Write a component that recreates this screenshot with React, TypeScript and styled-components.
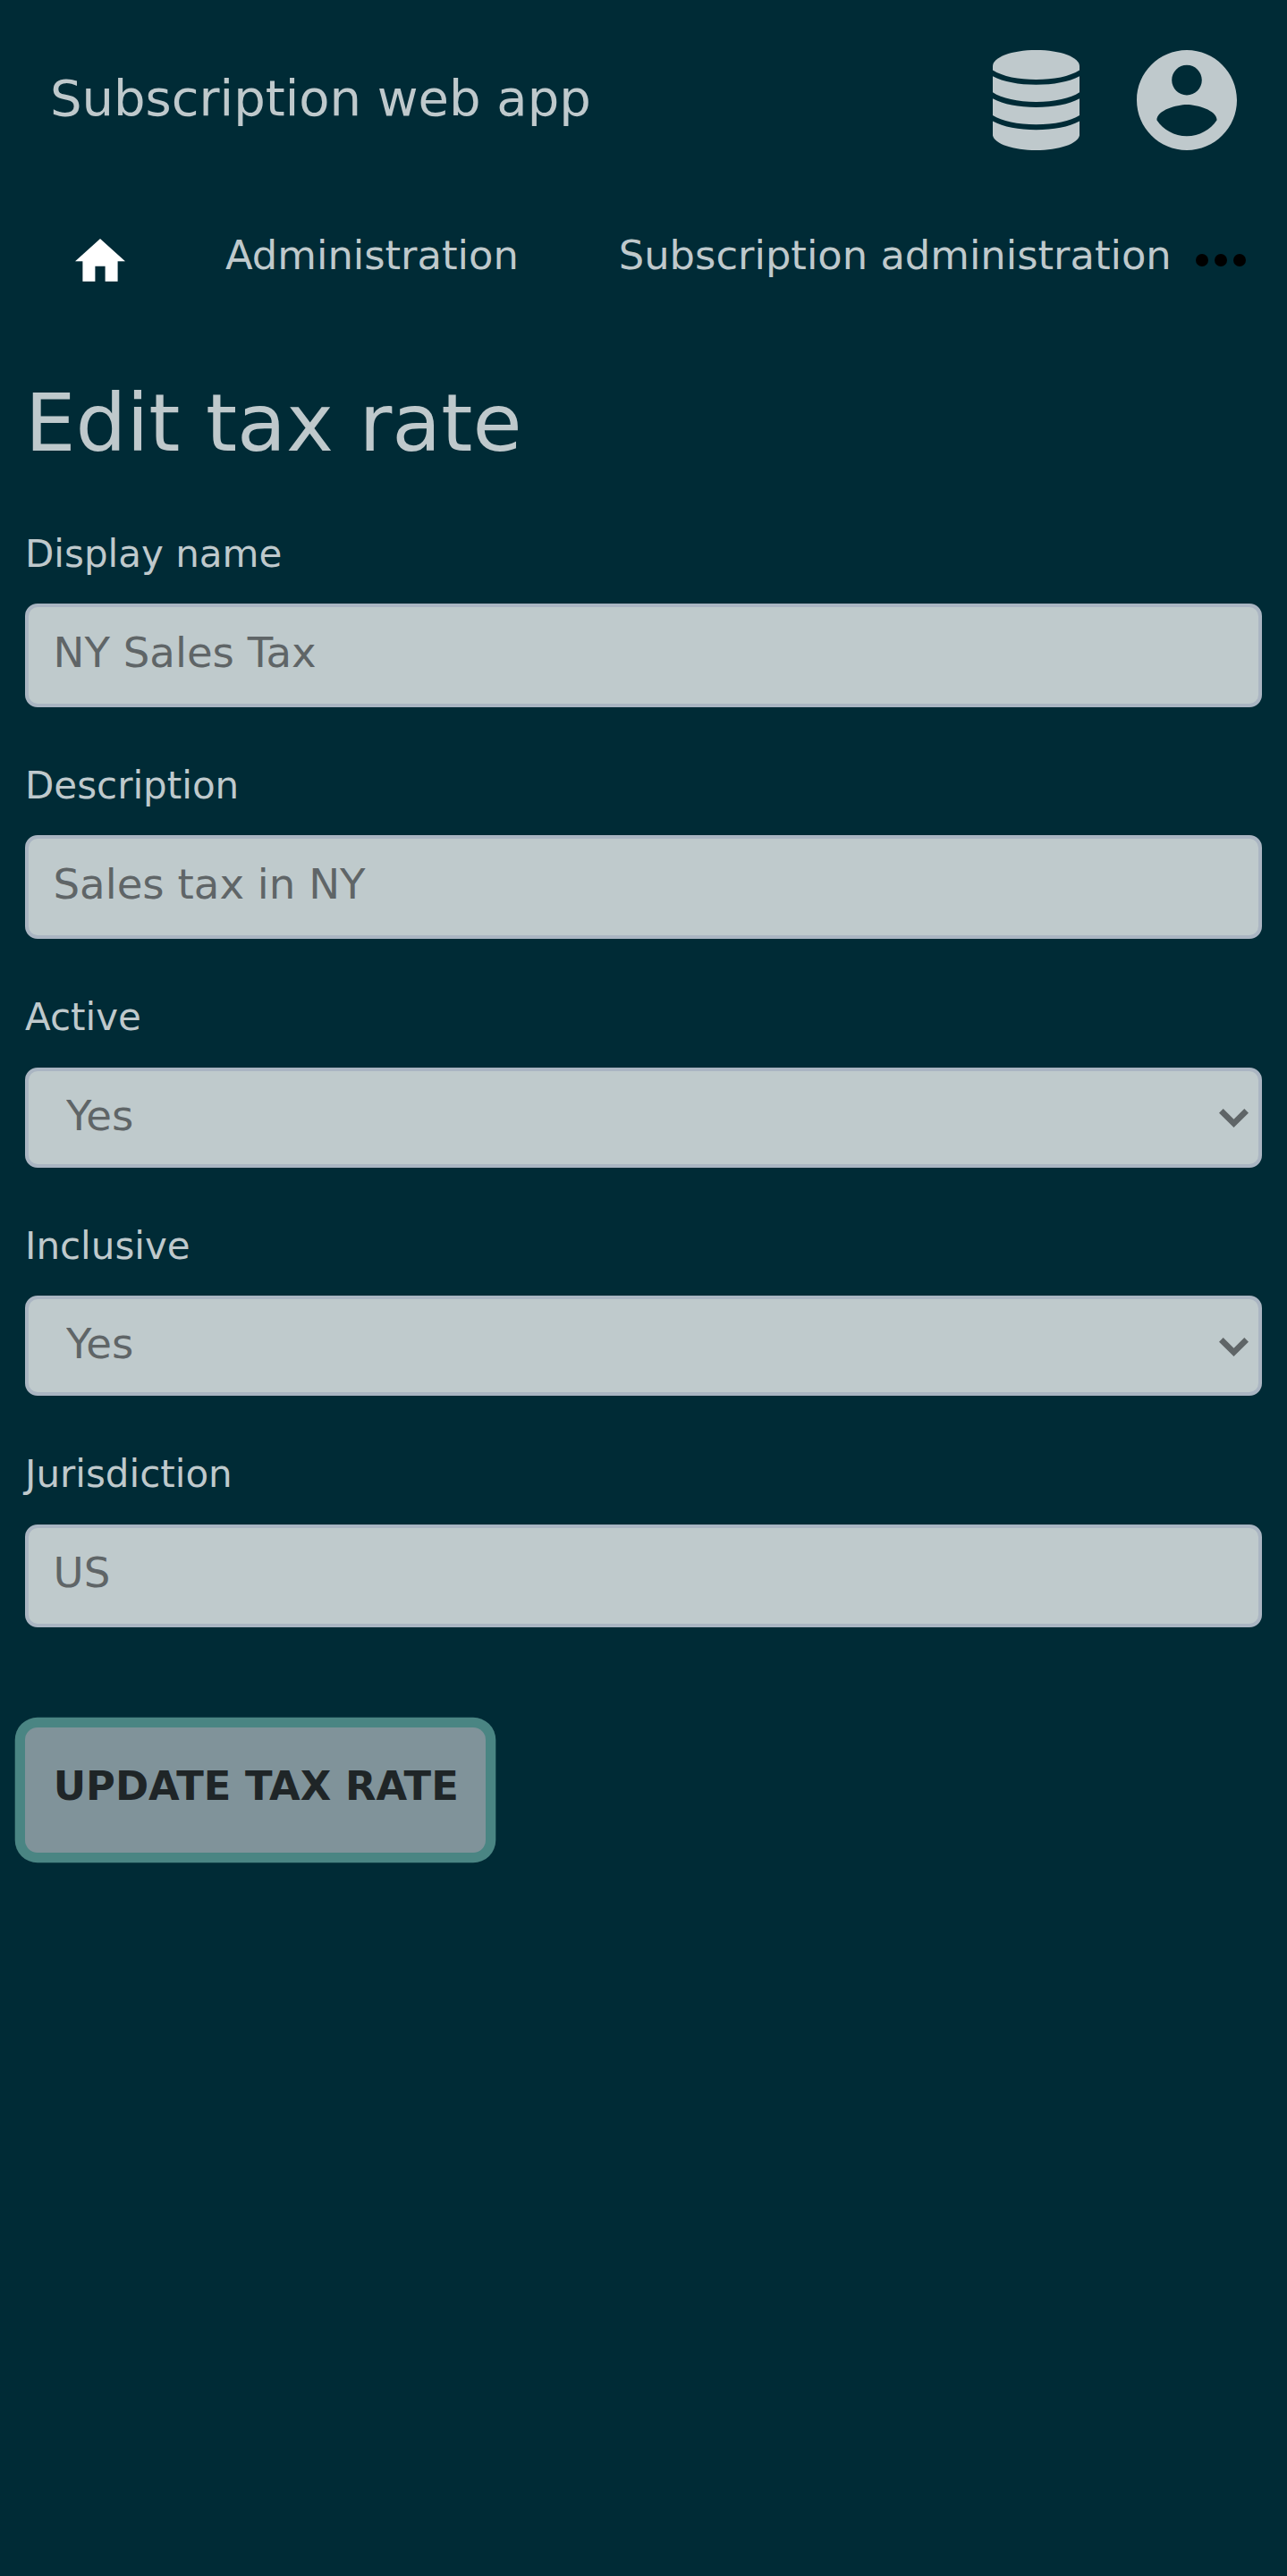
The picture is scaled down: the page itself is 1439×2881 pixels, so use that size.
import React from "react";
import styled, { createGlobalStyle } from "styled-components";

const color = {
  page: "#002b36",
  text: "#bfc9cc",
  field: "#bfcacc",
  fieldBorder: "#aab5c2",
  fieldText: "#5f6567",
  button: "#80939a",
  ring: "#4a8583",
  buttonText: "#1f2527",
};

const GlobalStyle = createGlobalStyle`
  *, *::before, *::after { box-sizing: border-box; }
  body {
    margin: 0;
    background: ${color.page};
    color: ${color.text};
    font-family: "DejaVu Sans", sans-serif;
  }
`;

const Page = styled.div`
  min-height: 2881px;
  display: flex;
  flex-direction: column;
  overflow: hidden;
`;

const Header = styled.header`
  display: flex;
  align-items: center;
  justify-content: space-between;
  height: 224px;
  padding: 0 56.4px 0 56px;
`;

const Brand = styled.div`
  font-size: 56px;
  line-height: 84px;
  white-space: nowrap;
  margin-bottom: 5px;
`;

const HeaderIcons = styled.div`
  display: flex;
  align-items: center;
  gap: 64px;
  color: ${color.text};
  svg { display: block; }
`;

const Nav = styled.nav`
  display: flex;
  align-items: center;
  height: 124px;
  padding-left: 84px;
`;

const HomeLink = styled.a`
  display: flex;
  color: #ffffff;
  margin: 10px 112px 0 0;
`;

const NavLink = styled.a`
  font-size: 44.8px;
  line-height: 68px;
  white-space: nowrap;
  color: inherit;
  & + & { margin-left: 112px; }
`;

const MoreButton = styled.span`
  display: flex;
  color: #000000;
  margin: 9px 0 0 27px;
`;

const Main = styled.main`
  display: flex;
  flex-direction: column;
  align-items: stretch;
  padding: 57px 28px 0;
`;

const Title = styled.h1`
  margin: 0 0 46.9px;
  font-size: 89.6px;
  font-weight: 400;
  line-height: 136px;
`;

const Form = styled.form`
  display: flex;
  flex-direction: column;
`;

const Field = styled.div`
  display: flex;
  flex-direction: column;
  margin-bottom: 56px;
`;

const Label = styled.label`
  font-size: 42px;
  line-height: 63px;
  margin-bottom: 24.5px;
`;

const controlStyles = `
  display: block;
  width: 1382.5px;
  border: 4px solid ${color.fieldBorder};
  border-radius: 14px;
  background: ${color.field};
  color: ${color.fieldText};
  font-family: inherit;
  font-size: 46.67px;
  outline: none;
`;

const TextInput = styled.input`
  ${controlStyles}
  height: 115.6px;
  padding: 0 27.5px 7px;
`;

const SelectWrap = styled.div`
  display: grid;
  align-items: center;
  width: 1382.5px;
  > * { grid-area: 1 / 1; }
`;

const Select = styled.select`
  ${controlStyles}
  height: 112px;
  padding: 0 70px 4px 42px;
  appearance: none;
`;

const Chevron = styled.svg`
  justify-self: end;
  margin-right: 15px;
  margin-top: 2px;
  color: ${color.fieldText};
  pointer-events: none;
`;

const SubmitButton = styled.button`
  align-self: flex-start;
  width: 514.5px;
  height: 140px;
  margin-top: 56px;
  padding: 0 0 10px 2px;
  border: 0;
  border-radius: 14px;
  background: ${color.button};
  box-shadow: 0 0 0 11.3px ${color.ring};
  color: ${color.buttonText};
  font-family: inherit;
  font-size: 44.8px;
  font-weight: 700;
  text-transform: uppercase;
  white-space: nowrap;
`;

function DatabaseIcon() {
  return (
    <svg width="97" height="112" viewBox="0 0 97 112" fill="currentColor">
      <path d="M0 18C0 8 21 0 48.5 0S97 8 97 18V22.5C86 29.500 68 33 48.500 33S11 29.500 0 22.500Z" />
      <path d="M0 29.200C12 35.500 29 38.700 48.500 38.700S85 35.500 97 29.200V47.300C87 54 69 58 48.500 58S10 54 0 47.300Z" />
      <path d="M0 54.300C12 60.700 29 64 48.500 64S85 60.700 97 54.300V73C87 79.500 69 83.300 48.500 83.300S10 79.500 0 73Z" />
      <path d="M0 79.500C12 86 29 89.200 48.500 89.200S85 86 97 79.500V95.500C95 105 74 112 48.500 112S2 105 0 95.500Z" />
    </svg>
  );
}

function AccountIcon() {
  return (
    <svg width="112" height="112" viewBox="2 2 20 20" fill="currentColor">
      <path d="M12 2C6.480 2 2 6.480 2 12s4.480 10 10 10 10-4.480 10-10S17.520 2 12 2zm0 3c1.660 0 3 1.340 3 3s-1.340 3-3 3-3-1.340-3-3 1.340-3 3-3zm0 14.200c-2.500 0-4.710-1.280-6-3.220.03-1.990 4-3.080 6-3.080 1.990 0 5.970 1.090 6 3.080-1.290 1.940-3.500 3.220-6 3.220z" />
    </svg>
  );
}

function HomeIcon() {
  return (
    <svg width="56" height="47.700" viewBox="2 3 20 17" fill="currentColor">
      <path d="M10 20v-6h4v6h5v-8h3L12 3 2 12h3v8z" />
    </svg>
  );
}

function MoreIcon() {
  return (
    <svg width="56" height="14" viewBox="0 0 56 14" fill="currentColor">
      <circle cx="7" cy="7" r="7" />
      <circle cx="28" cy="7" r="7" />
      <circle cx="49" cy="7" r="7" />
    </svg>
  );
}

function TextField({ id, label, value }: { id: string; label: string; value: string }) {
  return (
    <Field>
      <Label htmlFor={id}>{label}</Label>
      <TextInput id={id} type="text" defaultValue={value} />
    </Field>
  );
}

function SelectField({ id, label }: { id: string; label: string }) {
  return (
    <Field>
      <Label htmlFor={id}>{label}</Label>
      <SelectWrap>
        <Select id={id} defaultValue="yes">
          <option value="yes">Yes</option>
        </Select>
        <Chevron width="33" height="21" viewBox="0 0 33 21" fill="currentColor">
          <path d="M4.700 0L16.500 11.700L28.300 0L33 4.700L16.500 21L0 4.700Z" />
        </Chevron>
      </SelectWrap>
    </Field>
  );
}

export default function App() {
  return (
    <Page>
      <GlobalStyle />
      <Header>
        <Brand>Subscription web app</Brand>
        <HeaderIcons>
          <DatabaseIcon />
          <AccountIcon />
        </HeaderIcons>
      </Header>
      <Nav>
        <HomeLink>
          <HomeIcon />
        </HomeLink>
        <NavLink>Administration</NavLink>
        <NavLink>Subscription administration</NavLink>
        <MoreButton>
          <MoreIcon />
        </MoreButton>
      </Nav>
      <Main>
        <Title>Edit tax rate</Title>
        <Form>
          <TextField id="display-name" label="Display name" value="NY Sales Tax" />
          <TextField id="description" label="Description" value="Sales tax in NY" />
          <SelectField id="active" label="Active" />
          <SelectField id="inclusive" label="Inclusive" />
          <TextField id="jurisdiction" label="Jurisdiction" value="US" />
          <SubmitButton type="button">Update tax rate</SubmitButton>
        </Form>
      </Main>
    </Page>
  );
}
